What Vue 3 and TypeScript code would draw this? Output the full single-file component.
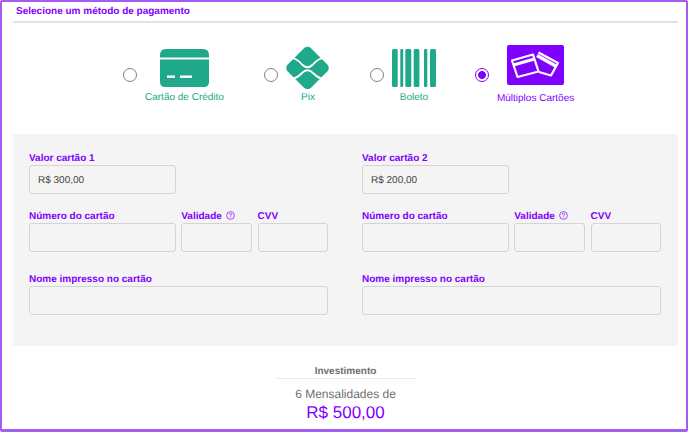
<script setup lang="ts">
interface CardForm {
  title: string
  value: string
}

const cards: CardForm[] = [
  { title: 'Valor cartão 1', value: 'R$ 300,00' },
  { title: 'Valor cartão 2', value: 'R$ 200,00' },
]
</script>

<template>
  <div class="frame">
    <h2 class="title">Selecione um método de pagamento</h2>

    <div class="methods">
      <label class="method">
        <span class="radio"></span>
        <span class="method-body">
          <svg width="49" height="38" viewBox="0 0 49 38">
            <path d="M0 6 Q0 0 6 0 H43 Q49 0 49 6 V8.500 H0 Z" fill="#20a88a" />
            <path d="M0 10.500 H49 V33 Q49 38 44 38 H5 Q0 38 0 33 Z" fill="#20a88a" />
            <rect x="7" y="26.500" width="8" height="2.400" fill="#fff" />
            <rect x="20" y="26.500" width="12" height="2.400" fill="#fff" />
          </svg>
          <span class="method-name">Cartão de Crédito</span>
        </span>
      </label>

      <label class="method">
        <span class="radio"></span>
        <span class="method-body">
          <svg class="icon-pix" width="44" height="44" viewBox="0 0 44 44">
            <rect x="5" y="5.500" width="33" height="33" rx="5" fill="#20a88a" transform="rotate(45 21.500 22)" />
            <path d="M3 12 C9 11 13 15 16 18.500 C19.500 22 23.500 22 27 18.500 C30 15 34 11 40 12" fill="none" stroke="#fff" stroke-width="1.800" />
            <path d="M4 33 C10 33 13 30 16 27 C19.500 23.500 23.500 23.500 27 27 C30 30 33 33 39 33" fill="none" stroke="#fff" stroke-width="1.800" />
          </svg>
          <span class="method-name">Pix</span>
        </span>
      </label>

      <label class="method">
        <span class="radio"></span>
        <span class="method-body">
          <svg width="44" height="38" viewBox="0 0 44 38">
            <rect x="0" width="5.700" height="38" rx="1.500" fill="#20a88a" />
            <rect x="8.300" width="2.900" height="38" rx="1" fill="#20a88a" />
            <rect x="13.300" width="6" height="38" rx="1.500" fill="#20a88a" />
            <rect x="21.700" width="5.700" height="38" rx="1.500" fill="#20a88a" />
            <rect x="32" width="3.300" height="38" rx="1" fill="#20a88a" />
            <rect x="38" width="6" height="38" rx="1.500" fill="#20a88a" />
          </svg>
          <span class="method-name">Boleto</span>
        </span>
      </label>

      <label class="method method-last">
        <span class="radio checked"></span>
        <span class="method-body">
          <svg class="icon-multi" width="57" height="40" viewBox="0 0 57 40">
            <rect width="57" height="40" rx="2" fill="#7f00ff" />
            <g fill="none" stroke="#fff" stroke-width="2.200" stroke-linejoin="round">
              <path d="M31.500 7.500 L51 18 L44 30.500 L32 27" />
              <path d="M5 15.500 L26 9.500 L31.500 26.500 L10.500 32 Z" fill="#7f00ff" />
            </g>
            <path d="M6.500 20 L27.500 14" stroke="#fff" stroke-width="3" />
            <path d="M30 10.500 L49.500 21.500" stroke="#fff" stroke-width="3.500" />
          </svg>
          <span class="method-name selected">Múltiplos Cartões</span>
        </span>
      </label>
    </div>

    <section class="panel">
      <div v-for="card in cards" :key="card.title" class="col">
        <div class="field value-field">
          <span class="label">{{ card.title }}</span>
          <div class="input">{{ card.value }}</div>
        </div>
        <div class="row">
          <div class="field">
            <span class="label">Número do cartão</span>
            <div class="input"></div>
          </div>
          <div class="field">
            <span class="label">Validade
              <svg class="help" width="9" height="9" viewBox="0 0 9 9">
                <circle cx="4.500" cy="4.500" r="3.900" fill="none" stroke="#7f00ff" stroke-width=".7" />
                <path d="M3.200 3.600 Q3.300 2.400 4.500 2.400 Q5.800 2.500 5.700 3.500 Q5.600 4.200 4.500 4.800 V5.400" fill="none" stroke="#7f00ff" stroke-width=".7" />
                <circle cx="4.500" cy="6.500" r=".45" fill="#7f00ff" />
              </svg>
            </span>
            <div class="input"></div>
          </div>
          <div class="field">
            <span class="label">CVV</span>
            <div class="input"></div>
          </div>
        </div>
        <div class="field">
          <span class="label">Nome impresso no cartão</span>
          <div class="input"></div>
        </div>
      </div>
    </section>

    <div class="summary">
      <div class="summary-title">Investimento</div>
      <div class="summary-term">6 Mensalidades de</div>
      <div class="summary-price">R$ 500,00</div>
    </div>
  </div>
</template>

<style scoped>
.frame {
  box-sizing: border-box;
  width: 688px;
  height: 432px;
  padding: 0 8px 0 11px;
  border: 2px solid #a45cf2;
  border-bottom-width: 3px;
  border-radius: 2px;
  background: #fff;
  overflow: hidden;
  font-family: "Liberation Sans", Arial, sans-serif;
  text-rendering: geometricPrecision;
}

.title {
  margin: 0;
  padding: 4px 0 3px 3px;
  border-bottom: 2px solid #e2e2e2;
  font-size: 10px;
  line-height: 12px;
  font-weight: 700;
  color: #7f00ff;
}

.methods {
  display: flex;
  gap: 40px;
  margin-top: 26px;
  padding-left: 110px;
  height: 85px;
}

.method {
  display: flex;
  align-items: flex-start;
  gap: 8px;
}

.method-last {
  margin-left: -1px;
}

.radio {
  box-sizing: border-box;
  flex: none;
  width: 14px;
  height: 14px;
  margin-top: 19px;
  border: 1.5px solid #808080;
  border-radius: 50%;
}

.radio.checked {
  border-color: #7f00ff;
  background: radial-gradient(circle, #7f00ff 0 3.600px, #fff 4.200px);
}

.method-body {
  display: flex;
  flex-direction: column;
  align-items: center;
}

.method-name {
  margin-top: 5px;
  font-size: 10px;
  line-height: 12px;
  color: #20a88a;
  white-space: nowrap;
}

.method-name.selected {
  color: #7f00ff;
  margin-top: 8px;
}

.icon-pix {
  margin-top: -3px;
  margin-bottom: -3px;
}

.icon-multi {
  margin-top: -4px;
}

.panel {
  display: flex;
  gap: 34px;
  height: 212px;
  box-sizing: border-box;
  padding: 19px 17px 0 16px;
  border-radius: 2px;
  background: #f4f4f4;
}

.col {
  width: 299px;
}

.field {
  min-width: 0;
}

.value-field {
  width: 147px;
  margin-bottom: 17px;
}

.row {
  display: grid;
  grid-template-columns: 147px 71px 70px;
  column-gap: 5.250px;
  margin-bottom: 22px;
}

.label {
  display: block;
  height: 12px;
  font-size: 10px;
  line-height: 12px;
  font-weight: 700;
  color: #7f00ff;
  white-space: nowrap;
}

.help {
  margin-left: 1px;
  vertical-align: -1px;
}

.input {
  box-sizing: border-box;
  height: 29px;
  padding: 0 8px;
  border: 1px solid #d4d4d4;
  border-radius: 3px;
  background: #f4f4f4;
  font-size: 10px;
  line-height: 29px;
  color: #444;
}

.summary {
  text-align: center;
}

.summary-title {
  width: 142px;
  margin: 19px auto 0;
  border-bottom: 1px solid #ececec;
  font-size: 10px;
  line-height: 13px;
  font-weight: 700;
  color: #6f6f6f;
}

.summary-term {
  margin-top: 8px;
  font-size: 12px;
  line-height: 15px;
  color: #6f6f6f;
}

.summary-price {
  margin-top: 1px;
  font-size: 17px;
  line-height: 20px;
  color: #7f00ff;
}
</style>

<style>
html,
body {
  margin: 0;
  background: #fff;
}
</style>
